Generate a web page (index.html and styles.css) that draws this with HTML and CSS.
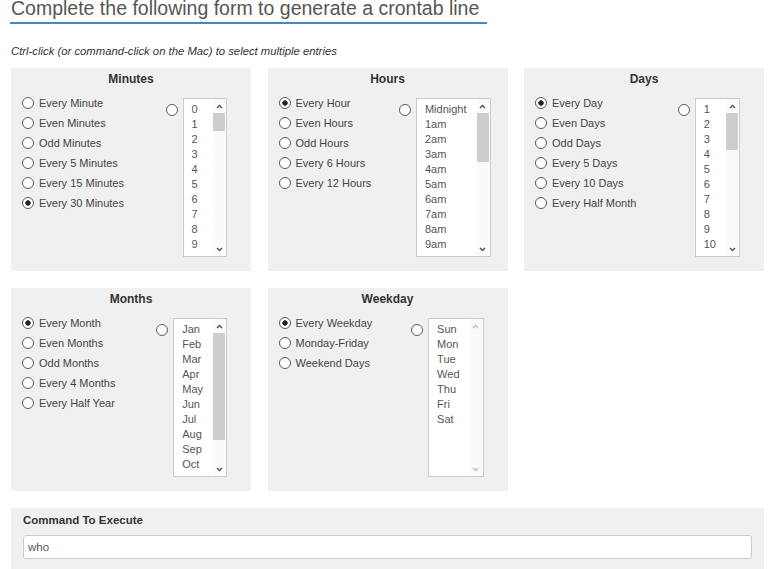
FILE: index.html
```html
<!DOCTYPE html>
<html lang="en">
<head>
<meta charset="utf-8">
<title>Crontab generator</title>
<link rel="stylesheet" href="styles.css">
</head>
<body>
<div class="page">
  <h1 class="title">Complete the following form to generate a crontab line</h1>
  <p class="hint">Ctrl-click (or command-click on the Mac) to select multiple entries</p>

  <div class="grid">
    <section class="panel">
      <h2 class="panel-title">Minutes</h2>
      <div class="panel-body">
        <div class="choices">
          <label class="choice"><input type="radio" class="radio" name="minute">Every Minute</label>
          <label class="choice"><input type="radio" class="radio" name="minute">Even Minutes</label>
          <label class="choice"><input type="radio" class="radio" name="minute">Odd Minutes</label>
          <label class="choice"><input type="radio" class="radio" name="minute">Every 5 Minutes</label>
          <label class="choice"><input type="radio" class="radio" name="minute">Every 15 Minutes</label>
          <label class="choice"><input type="radio" class="radio" name="minute" checked>Every 30 Minutes</label>
        </div>
        <div class="pick">
          <input type="radio" class="radio pick-radio" name="minute">
          <div class="listbox">
            <div class="options options-num">
              <div class="opt">0</div><div class="opt">1</div><div class="opt">2</div><div class="opt">3</div><div class="opt">4</div>
              <div class="opt">5</div><div class="opt">6</div><div class="opt">7</div><div class="opt">8</div><div class="opt">9</div>
            </div>
            <div class="scroll">
              <div class="sbtn"><svg width="7" height="5" viewBox="0 0 7 5"><path d="M1 4 L3.5 1.4 L6 4" /></svg></div>
              <div class="track"><div class="thumb" style="height:18px"></div></div>
              <div class="sbtn"><svg width="7" height="5" viewBox="0 0 7 5"><path d="M1 1 L3.5 3.6 L6 1" /></svg></div>
            </div>
          </div>
        </div>
      </div>
    </section>

    <section class="panel">
      <h2 class="panel-title">Hours</h2>
      <div class="panel-body panel-body-wide">
        <div class="choices">
          <label class="choice"><input type="radio" class="radio" name="hour" checked>Every Hour</label>
          <label class="choice"><input type="radio" class="radio" name="hour">Even Hours</label>
          <label class="choice"><input type="radio" class="radio" name="hour">Odd Hours</label>
          <label class="choice"><input type="radio" class="radio" name="hour">Every 6 Hours</label>
          <label class="choice"><input type="radio" class="radio" name="hour">Every 12 Hours</label>
        </div>
        <div class="pick">
          <input type="radio" class="radio pick-radio" name="hour">
          <div class="listbox">
            <div class="options">
              <div class="opt">Midnight</div><div class="opt">1am</div><div class="opt">2am</div><div class="opt">3am</div><div class="opt">4am</div>
              <div class="opt">5am</div><div class="opt">6am</div><div class="opt">7am</div><div class="opt">8am</div><div class="opt">9am</div>
            </div>
            <div class="scroll">
              <div class="sbtn"><svg width="7" height="5" viewBox="0 0 7 5"><path d="M1 4 L3.5 1.4 L6 4" /></svg></div>
              <div class="track"><div class="thumb" style="height:49px"></div></div>
              <div class="sbtn"><svg width="7" height="5" viewBox="0 0 7 5"><path d="M1 1 L3.5 3.6 L6 1" /></svg></div>
            </div>
          </div>
        </div>
      </div>
    </section>

    <section class="panel">
      <h2 class="panel-title">Days</h2>
      <div class="panel-body">
        <div class="choices">
          <label class="choice"><input type="radio" class="radio" name="day" checked>Every Day</label>
          <label class="choice"><input type="radio" class="radio" name="day">Even Days</label>
          <label class="choice"><input type="radio" class="radio" name="day">Odd Days</label>
          <label class="choice"><input type="radio" class="radio" name="day">Every 5 Days</label>
          <label class="choice"><input type="radio" class="radio" name="day">Every 10 Days</label>
          <label class="choice"><input type="radio" class="radio" name="day">Every Half Month</label>
        </div>
        <div class="pick">
          <input type="radio" class="radio pick-radio" name="day">
          <div class="listbox">
            <div class="options options-num">
              <div class="opt">1</div><div class="opt">2</div><div class="opt">3</div><div class="opt">4</div><div class="opt">5</div>
              <div class="opt">6</div><div class="opt">7</div><div class="opt">8</div><div class="opt">9</div><div class="opt">10</div>
            </div>
            <div class="scroll">
              <div class="sbtn"><svg width="7" height="5" viewBox="0 0 7 5"><path d="M1 4 L3.5 1.4 L6 4" /></svg></div>
              <div class="track"><div class="thumb" style="height:37px"></div></div>
              <div class="sbtn"><svg width="7" height="5" viewBox="0 0 7 5"><path d="M1 1 L3.5 3.6 L6 1" /></svg></div>
            </div>
          </div>
        </div>
      </div>
    </section>

    <section class="panel">
      <h2 class="panel-title">Months</h2>
      <div class="panel-body">
        <div class="choices">
          <label class="choice"><input type="radio" class="radio" name="month" checked>Every Month</label>
          <label class="choice"><input type="radio" class="radio" name="month">Even Months</label>
          <label class="choice"><input type="radio" class="radio" name="month">Odd Months</label>
          <label class="choice"><input type="radio" class="radio" name="month">Every 4 Months</label>
          <label class="choice"><input type="radio" class="radio" name="month">Every Half Year</label>
        </div>
        <div class="pick">
          <input type="radio" class="radio pick-radio" name="month">
          <div class="listbox">
            <div class="options">
              <div class="opt">Jan</div><div class="opt">Feb</div><div class="opt">Mar</div><div class="opt">Apr</div><div class="opt">May</div>
              <div class="opt">Jun</div><div class="opt">Jul</div><div class="opt">Aug</div><div class="opt">Sep</div><div class="opt">Oct</div>
            </div>
            <div class="scroll">
              <div class="sbtn"><svg width="7" height="5" viewBox="0 0 7 5"><path d="M1 4 L3.5 1.4 L6 4" /></svg></div>
              <div class="track"><div class="thumb" style="height:107px"></div></div>
              <div class="sbtn"><svg width="7" height="5" viewBox="0 0 7 5"><path d="M1 1 L3.5 3.6 L6 1" /></svg></div>
            </div>
          </div>
        </div>
      </div>
    </section>

    <section class="panel">
      <h2 class="panel-title">Weekday</h2>
      <div class="panel-body">
        <div class="choices">
          <label class="choice"><input type="radio" class="radio" name="weekday" checked>Every Weekday</label>
          <label class="choice"><input type="radio" class="radio" name="weekday">Monday-Friday</label>
          <label class="choice"><input type="radio" class="radio" name="weekday">Weekend Days</label>
        </div>
        <div class="pick">
          <input type="radio" class="radio pick-radio" name="weekday">
          <div class="listbox">
            <div class="options">
              <div class="opt">Sun</div><div class="opt">Mon</div><div class="opt">Tue</div><div class="opt">Wed</div><div class="opt">Thu</div>
              <div class="opt">Fri</div><div class="opt">Sat</div>
            </div>
            <div class="scroll scroll-off">
              <div class="sbtn"><svg width="7" height="5" viewBox="0 0 7 5"><path d="M1 4 L3.5 1.4 L6 4" /></svg></div>
              <div class="track"></div>
              <div class="sbtn"><svg width="7" height="5" viewBox="0 0 7 5"><path d="M1 1 L3.5 3.6 L6 1" /></svg></div>
            </div>
          </div>
        </div>
      </div>
    </section>

    <section class="panel panel-command">
      <h2 class="command-title">Command To Execute</h2>
      <input type="text" class="command-input" value="who">
    </section>
  </div>
</div>
</body>
</html>
```
FILE: styles.css
```css
html, body {
  margin: 0;
  padding: 0;
  background: #fff;
}

body {
  font-family: "Liberation Sans", Arial, sans-serif;
  color: #444;
  overflow: hidden;
}

.page {
  padding-left: 10px;
}

.title {
  display: inline-block;
  margin: -3px 0 0 0;
  padding: 0 8px 3px 1px;
  font-size: 19.5px;
  line-height: 22px;
  font-weight: normal;
  color: #555;
  border-bottom: 2px solid #4a86c0;
}

.hint {
  margin: 20px 0 0 1px;
  font-size: 11.3px;
  line-height: 14px;
  font-style: italic;
  color: #333;
}

.grid {
  margin-top: 10px;
  margin-left: 1px;
  width: 753px;
  display: grid;
  grid-template-columns: 240px 240px 240px;
  column-gap: 16.5px;
  row-gap: 17px;
}

.panel {
  background: #f0f0f0;
  padding: 4px 0 14px 0;
  box-sizing: border-box;
}

.panel-title {
  margin: 0;
  font-size: 12px;
  line-height: 14px;
  font-weight: bold;
  text-align: center;
  color: #333;
}

.panel-body {
  margin-top: 7px;
  padding: 0 24px 0 11px;
  display: flex;
  justify-content: space-between;
  align-items: flex-start;
}

.panel-body-wide {
  padding-right: 17px;
}

.choices {
  display: flex;
  flex-direction: column;
}

.choice {
  display: flex;
  align-items: center;
  gap: 5px;
  height: 20px;
  font-size: 11px;
  color: #444;
  white-space: nowrap;
}

.radio {
  appearance: none;
  -webkit-appearance: none;
  margin: 0;
  width: 12px;
  height: 12px;
  box-sizing: border-box;
  border: 1px solid #5a5a5a;
  border-radius: 50%;
  background: #fff;
  flex: none;
}

.radio:checked {
  background: radial-gradient(circle, #222 0, #222 2.4px, #fff 3px);
}

.pick {
  margin-top: 5px;
  display: flex;
  align-items: flex-start;
  gap: 5px;
}

.pick-radio {
  margin-top: 6px;
}

.listbox {
  display: flex;
  background: #fff;
  border: 1px solid #cbcbcb;
  height: 159px;
  box-sizing: border-box;
}

.options {
  padding: 3px 10px 0 8px;
}

.options-num {
  min-width: 11.5px;
}

.opt {
  font-size: 11px;
  line-height: 15px;
  height: 15px;
  color: #555;
  white-space: nowrap;
}

.scroll {
  width: 12px;
  margin-right: 1px;
  display: flex;
  flex-direction: column;
  background: #fafafa;
}

.sbtn {
  height: 14px;
  display: flex;
  align-items: center;
  justify-content: center;
  flex: none;
}

.sbtn path {
  fill: none;
  stroke: #555;
  stroke-width: 1.4;
}

.scroll-off .sbtn path {
  stroke: #bdbdbd;
}

.track {
  flex: 1;
}

.thumb {
  background: #cdcdcd;
}

.panel-command {
  grid-column: 1 / span 3;
  padding: 5px 12px 10px 12px;
}

.command-title {
  margin: 0 0 8px 0;
  font-size: 11.5px;
  line-height: 14px;
  font-weight: bold;
  color: #333;
}

.command-input {
  display: block;
  width: 100%;
  box-sizing: border-box;
  height: 24px;
  margin: 0;
  padding: 0 4px;
  border: 1px solid #ccc;
  border-radius: 3px;
  background: #fff;
  font-family: "Liberation Sans", Arial, sans-serif;
  font-size: 11.5px;
  color: #555;
}
```
